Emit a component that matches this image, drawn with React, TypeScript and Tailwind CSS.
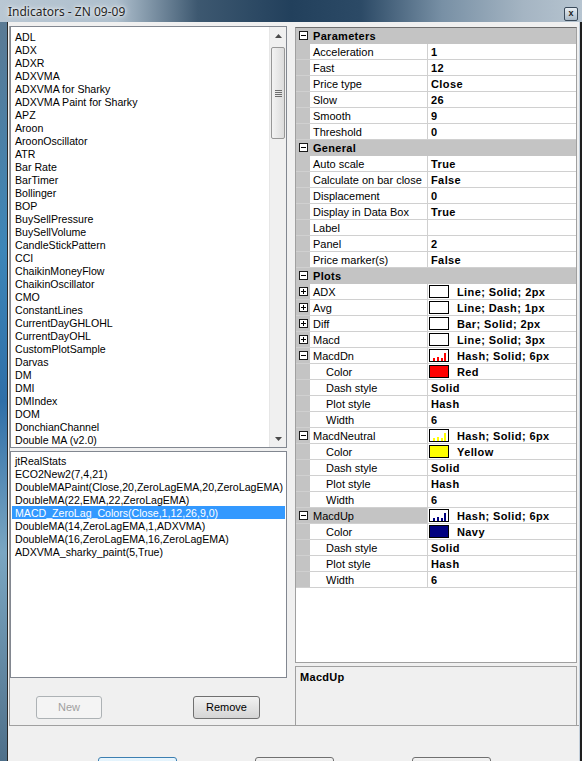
import React from "react";

const indicators = [
  "ADL",
  "ADX",
  "ADXR",
  "ADXVMA",
  "ADXVMA for Sharky",
  "ADXVMA Paint for Sharky",
  "APZ",
  "Aroon",
  "AroonOscillator",
  "ATR",
  "Bar Rate",
  "BarTimer",
  "Bollinger",
  "BOP",
  "BuySellPressure",
  "BuySellVolume",
  "CandleStickPattern",
  "CCI",
  "ChaikinMoneyFlow",
  "ChaikinOscillator",
  "CMO",
  "ConstantLines",
  "CurrentDayGHLOHL",
  "CurrentDayOHL",
  "CustomPlotSample",
  "Darvas",
  "DM",
  "DMI",
  "DMIndex",
  "DOM",
  "DonchianChannel",
  "Double MA (v2.0)",
];

const applied = [
  "jtRealStats",
  "ECO2New2(7,4,21)",
  "DoubleMAPaint(Close,20,ZeroLagEMA,20,ZeroLagEMA)",
  "DoubleMA(22,EMA,22,ZeroLagEMA)",
  "MACD_ZeroLag_Colors(Close,1,12,26,9,0)",
  "DoubleMA(14,ZeroLagEMA,1,ADXVMA)",
  "DoubleMA(16,ZeroLagEMA,16,ZeroLagEMA)",
  "ADXVMA_sharky_paint(5,True)",
];

type Swatch =
  | { type: "empty" }
  | { type: "hash"; color: string }
  | { type: "fill"; color: string };

type Row =
  | { kind: "cat"; label: string }
  | {
      kind: "prop";
      name: string;
      value: string;
      sub?: boolean;
      toggle?: "open" | "closed";
      swatch?: Swatch;
      selected?: boolean;
    };

const rows: Row[] = [
  { kind: "cat", label: "Parameters" },
  { kind: "prop", name: "Acceleration", value: "1" },
  { kind: "prop", name: "Fast", value: "12" },
  { kind: "prop", name: "Price type", value: "Close" },
  { kind: "prop", name: "Slow", value: "26" },
  { kind: "prop", name: "Smooth", value: "9" },
  { kind: "prop", name: "Threshold", value: "0" },
  { kind: "cat", label: "General" },
  { kind: "prop", name: "Auto scale", value: "True" },
  { kind: "prop", name: "Calculate on bar close", value: "False" },
  { kind: "prop", name: "Displacement", value: "0" },
  { kind: "prop", name: "Display in Data Box", value: "True" },
  { kind: "prop", name: "Label", value: "" },
  { kind: "prop", name: "Panel", value: "2" },
  { kind: "prop", name: "Price marker(s)", value: "False" },
  { kind: "cat", label: "Plots" },
  { kind: "prop", name: "ADX", value: "Line; Solid; 2px", toggle: "closed", swatch: { type: "empty" } },
  { kind: "prop", name: "Avg", value: "Line; Dash; 1px", toggle: "closed", swatch: { type: "empty" } },
  { kind: "prop", name: "Diff", value: "Bar; Solid; 2px", toggle: "closed", swatch: { type: "empty" } },
  { kind: "prop", name: "Macd", value: "Line; Solid; 3px", toggle: "closed", swatch: { type: "empty" } },
  { kind: "prop", name: "MacdDn", value: "Hash; Solid; 6px", toggle: "open", swatch: { type: "hash", color: "#ff0000" } },
  { kind: "prop", name: "Color", value: "Red", sub: true, swatch: { type: "fill", color: "#ff0000" } },
  { kind: "prop", name: "Dash style", value: "Solid", sub: true },
  { kind: "prop", name: "Plot style", value: "Hash", sub: true },
  { kind: "prop", name: "Width", value: "6", sub: true },
  { kind: "prop", name: "MacdNeutral", value: "Hash; Solid; 6px", toggle: "open", swatch: { type: "hash", color: "#ffff00" } },
  { kind: "prop", name: "Color", value: "Yellow", sub: true, swatch: { type: "fill", color: "#ffff00" } },
  { kind: "prop", name: "Dash style", value: "Solid", sub: true },
  { kind: "prop", name: "Plot style", value: "Hash", sub: true },
  { kind: "prop", name: "Width", value: "6", sub: true },
  { kind: "prop", name: "MacdUp", value: "Hash; Solid; 6px", toggle: "open", swatch: { type: "hash", color: "#000080" }, selected: true },
  { kind: "prop", name: "Color", value: "Navy", sub: true, swatch: { type: "fill", color: "#000080" } },
  { kind: "prop", name: "Dash style", value: "Solid", sub: true },
  { kind: "prop", name: "Plot style", value: "Hash", sub: true },
  { kind: "prop", name: "Width", value: "6", sub: true },
];

function Toggle({ open }: { open: boolean }) {
  return (
    <svg width="9" height="9" viewBox="0 0 9 9" className="block">
      <rect x="0.5" y="0.5" width="8" height="8" fill="#ffffff" stroke="#1a1a1a" />
      <path d="M2 4.5h5" stroke="#000" />
      {!open && <path d="M4.5 2v5" stroke="#000" />}
    </svg>
  );
}

function SwatchBox({ swatch }: { swatch: Swatch }) {
  const fill = swatch.type === "fill" ? swatch.color : "#ffffff";
  return (
    <svg width="20" height="13" viewBox="0 0 20 13" className="block shrink-0">
      <rect x="0.5" y="0.5" width="19" height="12" fill={fill} stroke="#000" />
      {swatch.type === "hash" && (
        <g fill={swatch.color}>
          <rect x="4" y="9" width="2" height="3" />
          <rect x="8" y="8" width="2" height="4" />
          <rect x="12" y="9" width="2" height="3" />
          <rect x="15" y="4" width="2" height="8" />
        </g>
      )}
    </svg>
  );
}

function GridRow({ row }: { row: Row }) {
  if (row.kind === "cat") {
    return (
      <div className="flex h-[16px] items-center bg-[#c4c4c4] border-b border-[#c4c4c4]">
        <div className="w-[14px] flex justify-center pl-[1px]">
          <Toggle open />
        </div>
        <span className="pl-[3px] pt-[2px] font-bold tracking-[0.3px]">{row.label}</span>
      </div>
    );
  }
  return (
    <div className="flex h-[16px] border-b border-[#d0d0d0]">
      <div className="w-[14px] bg-[#c4c4c4] flex items-center justify-center pl-[1px]">
        {row.toggle && <Toggle open={row.toggle === "open"} />}
      </div>
      <div
        className={
          "w-[118px] border-r border-[#d0d0d0] flex items-center whitespace-nowrap overflow-hidden " +
          (row.sub ? "pl-[16px] " : "pl-[3px] ") +
          (row.selected ? "bg-[#c4c4c4]" : "bg-white")
        }
      >
        <span className="pt-[2px]">{row.name}</span>
      </div>
      <div className="flex-1 flex items-center bg-white font-bold tracking-[0.4px] whitespace-nowrap">
        {row.swatch ? (
          <>
            <span className="ml-[1px]">
              <SwatchBox swatch={row.swatch} />
            </span>
            <span className="ml-[8px] pt-[2px]">{row.value}</span>
          </>
        ) : (
          <span className="pl-[3px] pt-[2px]">{row.value}</span>
        )}
      </div>
    </div>
  );
}

function Arrow({ up }: { up: boolean }) {
  return (
    <svg width="7" height="4" viewBox="0 0 7 4" className="block">
      <path d={up ? "M0 4L3.5 0L7 4Z" : "M0 0L3.5 4L7 0Z"} fill="#4a4a4a" />
    </svg>
  );
}

function Scrollbar() {
  return (
    <div className="w-[17px] h-full bg-[#f0f0f0] border-l border-[#e6e6e6] flex flex-col">
      <div className="h-[17px] flex items-center justify-center">
        <Arrow up />
      </div>
      <div className="mx-[1px] mt-[3px] h-[92px] rounded-[2px] border border-[#979797] bg-gradient-to-r from-[#f3f3f3] to-[#dcdcdc] flex items-center justify-center">
        <div className="flex flex-col gap-[1px]">
          <div className="w-[7px] h-[1px] bg-[#6e6e6e]" />
          <div className="w-[7px] h-[1px] bg-[#6e6e6e]" />
          <div className="w-[7px] h-[1px] bg-[#6e6e6e]" />
          <div className="w-[7px] h-[1px] bg-[#6e6e6e]" />
        </div>
      </div>
      <div className="flex-1" />
      <div className="h-[17px] flex items-center justify-center">
        <Arrow up={false} />
      </div>
    </div>
  );
}

function WinButton({
  label,
  disabled,
  primary,
  className,
}: {
  label?: string;
  disabled?: boolean;
  primary?: boolean;
  className?: string;
}) {
  return (
    <div
      className={
        "h-[23px] rounded-[3px] border flex items-center justify-center " +
        (disabled
          ? "border-[#adb2b5] bg-[#f4f4f4] text-[#a0a0a0] "
          : primary
          ? "border-[#3c7fb1] bg-gradient-to-b from-[#eaf6fd] to-[#bee6fd] "
          : "border-[#707070] bg-gradient-to-b from-[#f2f2f2] to-[#d5d5d5] ") +
        (className ?? "")
      }
    >
      {label}
    </div>
  );
}

export default function App() {
  return (
    <div className="w-[582px] h-[761px] overflow-hidden flex flex-col font-['Liberation_Sans',Arial,sans-serif] text-[11px] leading-none text-black">
      <div className="h-[22px] shrink-0 flex items-center justify-between bg-[linear-gradient(90deg,#b9c7d3_0%,#aebfcd_20%,#3d5870_34%,#22405c_50%,#2c4a66_62%,#7890a5_76%,#a5b5c3_90%,#b6c4d0_100%)]">
        <span className="pl-[8px] pt-[2px] font-['Noto_Sans',sans-serif] text-[12px] text-[#262626] [text-shadow:0_0_6px_#ffffff,0_0_3px_#ffffff]">
          Indicators - ZN 09-09
        </span>
        <div className="mr-[4px] mt-[5px] w-[14px] h-[14px] rounded-[2px] border border-[#3a4a5a] bg-gradient-to-b from-[#e8eef3] to-[#a9b9c7] flex items-center justify-center text-[9px] font-bold text-[#1b1b1b]">
          x
        </div>
      </div>
      <div className="flex-1 flex">
        <div className="w-[7px] bg-[linear-gradient(180deg,#5a7a94_0%,#3d86b8_30%,#2f6fa8_50%,#7aa6c2_70%,#4b6b85_100%)]" />
        <div className="w-[1px] bg-[#2a2a2a]" />
        <div className="w-[571px] bg-[#f0f0f0] flex flex-col">
          <div className="ml-[1px] mt-[4px] h-[700px] flex border-l border-b border-[#a0a0a0]">
            <div className="w-[277px] flex flex-col">
              <div className="h-[422px] border border-[#828790] bg-white flex text-[10.6px]">
                <div className="flex-1 pt-[3px] pl-[4px]">
                  {indicators.map((name) => (
                    <div key={name} className="h-[13px] pt-[2px] flex items-center whitespace-nowrap">
                      {name}
                    </div>
                  ))}
                </div>
                <Scrollbar />
              </div>
              <div className="mt-[3px] h-[227px] border border-[#828790] bg-white pt-[2px] pl-[1px] pr-[1px] text-[10.6px]">
                {applied.map((name, i) => (
                  <div
                    key={name}
                    className={
                      "h-[13px] pt-[2px] flex items-center pl-[3px] whitespace-nowrap " +
                      (i === 4 ? "bg-[#3399ff] text-white" : "")
                    }
                  >
                    {name}
                  </div>
                ))}
              </div>
              <div className="mt-[18px] flex">
                <WinButton label="New" disabled className="ml-[26px] w-[66px] h-[22px]" />
                <WinButton label="Remove" className="ml-[91px] w-[67px] h-[22px]" />
              </div>
            </div>
            <div className="w-[8px]" />
            <div className="w-[282px] flex flex-col">
              <div className="mt-[1px] h-[636px] border border-[#a0a0a0] border-t-[#6d6d6d] bg-white">
                {rows.map((row, i) => (
                  <GridRow key={i} row={row} />
                ))}
              </div>
              <div className="mt-[3px] flex-1 border-t border-l border-r border-[#a0a0a0] px-[4px] pt-[5px] font-bold tracking-[0.3px]">
                MacdUp
              </div>
            </div>
          </div>
          <div className="mt-[31px] flex">
            <WinButton primary className="ml-[90px] w-[79px]" />
            <WinButton className="ml-[78px] w-[79px]" />
            <WinButton className="ml-[78px] w-[79px]" />
          </div>
        </div>
        <div className="w-[1px] bg-[#c3cfdb]" />
        <div className="w-[2px] bg-[#1e1e1e]" />
      </div>
    </div>
  );
}
